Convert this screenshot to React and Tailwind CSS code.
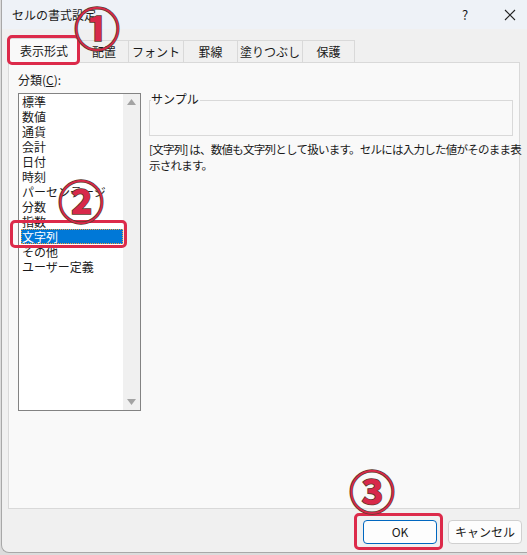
import React from "react";

const items = ["標準", "数値", "通貨", "会計", "日付", "時刻", "パーセンテージ", "分数", "指数", "文字列", "その他", "ユーザー定義"];
const tabs = [
  { label: "配置", w: "w-[49px]" },
  { label: "フォント", w: "w-[55px]" },
  { label: "罫線", w: "w-[54px]" },
  { label: "塗りつぶし", w: "w-[65px]" },
  { label: "保護", w: "w-[52px]" },
];

function Circled({ children, className }) {
  return (
    <span
      className={
        "absolute leading-none text-[46px] font-bold text-[#d8294a] [-webkit-text-stroke:1.5px_#5b3a2c] [paint-order:stroke_fill] " +
        className
      }
      style={{ fontFamily: '"Noto Sans CJK JP", sans-serif' }}
    >
      {children}
    </span>
  );
}

export default function App() {
  return (
    <div
      className="relative w-[527px] h-[555px] overflow-hidden bg-[#dcdcdc] text-[12px] text-[#1a1a1a]"
      style={{ fontFamily: '"Noto Sans CJK JP", "Noto Sans", sans-serif' }}
    >
      <div className="ml-[1px] w-[540px] h-[553px] flex flex-col bg-[#f0f0f0] border-l border-b border-[#a8a8a8] rounded-bl-[8px]">
        {/* title bar */}
        <div className="h-[29px] flex items-center bg-[#eef2f7] pl-[10px] shrink-0">
          <span className="text-[12px]">セルの書式設定</span>
          <span className="ml-[366px] text-[13px]">?</span>
          <svg className="ml-[36px]" width="12" height="12" viewBox="0 0 12 12">
            <path d="M1 1 L11 11 M11 1 L1 11" stroke="#222" strokeWidth="1.1" />
          </svg>
        </div>
        {/* tabs */}
        <div className="mt-[8px] ml-[6px] h-[25px] flex items-end shrink-0 relative z-10">
          <div className="w-[72px] h-[25px] bg-[#f9f9f9] border border-b-0 border-[#d9d9d9] flex items-center justify-center text-[12px] -mb-[1px]">
            表示形式
          </div>
          {tabs.map((t) => (
            <div
              key={t.label}
              className={t.w + " h-[22px] border border-l-0 border-b-0 border-[#d9d9d9] flex items-center justify-center text-[12px]"}
            >
              {t.label}
            </div>
          ))}
        </div>
        {/* panel */}
        <div className="ml-[6px] w-[512px] h-[447px] bg-[#f9f9f9] border border-[#d9d9d9] shrink-0 flex pl-[9px] pt-[10px]">
          <div className="flex flex-col w-[123px]">
            <div className="h-[20px] leading-[14px]">
              分類(<span className="underline">C</span>):
            </div>
            <div className="w-[123px] h-[318px] bg-white border border-[#838383] flex">
              <div className="flex-1 flex flex-col pl-[2px]">
                {items.map((it) => (
                  <div
                    key={it}
                    className={
                      "h-[15px] leading-[15px] pl-[1px] " +
                      (it === "文字列"
                        ? "bg-[#0078d7] text-white outline outline-1 outline-dotted outline-[#f0a040] -outline-offset-1"
                        : "")
                    }
                  >
                    {it}
                  </div>
                ))}
              </div>
              <div className="w-[17px] bg-[#f0f0f0] flex flex-col items-center justify-between py-[5px]">
                <svg width="9" height="6" viewBox="0 0 9 6">
                  <path d="M4.5 0 L9 6 L0 6 Z" fill="#a3a3a3" />
                </svg>
                <svg width="9" height="6" viewBox="0 0 9 6">
                  <path d="M0 0 L9 0 L4.5 6 Z" fill="#a3a3a3" />
                </svg>
              </div>
            </div>
          </div>
          <div className="ml-[8px] flex flex-col w-[364px] pt-[27px]">
            <div className="relative h-[36px] border border-[#d9d9d9]">
              <span className="absolute -top-[9px] left-[1px] bg-[#f9f9f9] pr-[1px] leading-[14px]">サンプル</span>
            </div>
            <div className="mt-[5px] leading-[16px] text-[11.5px] tracking-[-0.75px] whitespace-nowrap">
              [文字列] は、数値も文字列として扱います。セルには入力した値がそのまま表
              <br />
              示されます。
            </div>
          </div>
        </div>
        {/* buttons */}
        <div className="flex pl-[361px] pt-[11px] gap-[11px]">
          <div className="w-[74px] h-[24px] rounded-[4px] border border-[#0067c0] bg-[#fdfdfd] flex items-center justify-center text-[12px]">
            OK
          </div>
          <div className="w-[74px] h-[24px] rounded-[4px] border border-[#d0d0d0] bg-[#fdfdfd] flex items-center justify-center text-[12px]">
            キャンセル
          </div>
        </div>
      </div>

      {/* annotations */}
      <div className="absolute left-[7px] top-[35px] w-[73px] h-[30px] border-[3px] border-[#dc2a4a] rounded-[5px] z-20" />
      <div className="absolute left-[10px] top-[220px] w-[117px] h-[28px] border-[3px] border-[#dc2a4a] rounded-[5px] z-20" />
      <div className="absolute left-[354px] top-[513px] w-[89px] h-[37px] border-[3px] border-[#dc2a4a] rounded-[5px] z-20" />
      <Circled className="left-[74px] top-[3px] z-30">①</Circled>
      <Circled className="left-[58px] top-[176px] z-30">②</Circled>
      <Circled className="left-[349px] top-[466px] z-30">③</Circled>
    </div>
  );
}
